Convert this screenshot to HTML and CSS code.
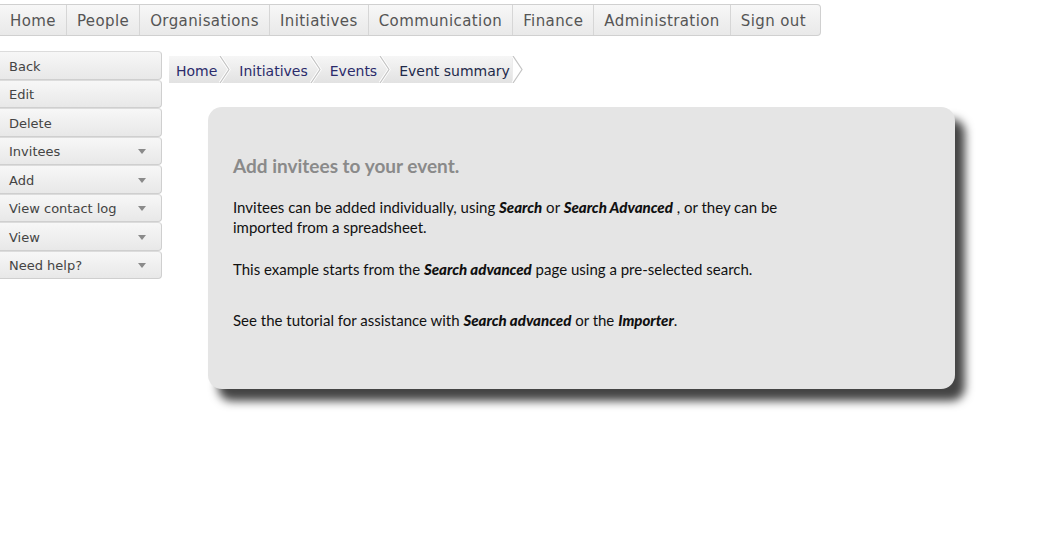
FILE: index.html
```html
<!DOCTYPE html>
<html>
<head>
<meta charset="utf-8">
<link rel="stylesheet" href="styles.css">
</head>
<body>
<nav class="topnav">
  <a class="nav-item">Home</a>
  <a class="nav-item">People</a>
  <a class="nav-item">Organisations</a>
  <a class="nav-item">Initiatives</a>
  <a class="nav-item">Communication</a>
  <a class="nav-item">Finance</a>
  <a class="nav-item">Administration</a>
  <a class="nav-item last">Sign out</a>
</nav>
<div class="main">
  <aside class="sidebar">
    <div class="side-btn">Back</div>
    <div class="side-btn">Edit</div>
    <div class="side-btn">Delete</div>
    <div class="side-btn drop">Invitees<span class="caret"></span></div>
    <div class="side-btn drop">Add<span class="caret"></span></div>
    <div class="side-btn drop">View contact log<span class="caret"></span></div>
    <div class="side-btn drop">View<span class="caret"></span></div>
    <div class="side-btn drop">Need help?<span class="caret"></span></div>
  </aside>
  <section class="content">
    <div class="crumbs">
      <span class="crumb">Home</span><svg class="chev" width="13" height="27" viewBox="0 0 13 27"><polyline points="1,0 10,13.5 1,27" fill="none" stroke="#fff" stroke-width="3"/><polyline points="1,0 10,13.5 1,27" fill="none" stroke="#c4c4c4" stroke-width="1.2"/></svg>
      <span class="crumb">Initiatives</span><svg class="chev" width="13" height="27" viewBox="0 0 13 27"><polyline points="1,0 10,13.5 1,27" fill="none" stroke="#fff" stroke-width="3"/><polyline points="1,0 10,13.5 1,27" fill="none" stroke="#c4c4c4" stroke-width="1.2"/></svg>
      <span class="crumb">Events</span><svg class="chev" width="13" height="27" viewBox="0 0 13 27"><polyline points="1,0 10,13.5 1,27" fill="none" stroke="#fff" stroke-width="3"/><polyline points="1,0 10,13.5 1,27" fill="none" stroke="#c4c4c4" stroke-width="1.2"/></svg>
      <span class="crumb current">Event summary</span><svg class="chev last" width="12" height="27" viewBox="0 0 12 27"><polyline points="1,0 10,13.5 1,27" fill="none" stroke="#fff" stroke-width="3"/><polyline points="1,0 10,13.5 1,27" fill="none" stroke="#c4c4c4" stroke-width="1.2"/></svg>
    </div>
    <div class="card">
      <h2 class="card-title">Add invitees to your event.</h2>
      <p class="card-text">Invitees can be added individually, using <b><i>Search</i></b> or <b><i>Search Advanced</i></b> , or they can be<br>imported from a spreadsheet.</p>
      <p class="card-text">This example starts from the <b><i>Search advanced</i></b> page using a pre-selected search.</p>
      <p class="card-text gap">See the tutorial for assistance with <b><i>Search advanced</i></b> or the <b><i>Importer</i></b>.</p>
    </div>
  </section>
</div>
</body>
</html>
```
FILE: styles.css
```css
html, body {
  margin: 0;
  padding: 0;
  background: #fff;
}
body {
  font-family: "DejaVu Sans", Verdana, sans-serif;
  min-height: 556px;
}
.topnav {
  display: flex;
  margin-top: 4px;
  width: max-content;
  height: 32px;
  box-sizing: border-box;
  border: 1px solid #d0d0d0;
  border-left: none;
  border-radius: 0 4px 4px 0;
  background: linear-gradient(#f7f7f7, #e9e9e9);
}
.nav-item {
  display: flex;
  align-items: center;
  padding: 1px 10px 0;
  font-size: 15px;
  letter-spacing: 0.4px;
  color: #555;
  border-right: 1px solid #d6d6d6;
  white-space: nowrap;
}
.nav-item.last {
  border-right: none;
  padding-right: 14px;
}
.main {
  display: flex;
  margin-top: 15px;
  padding-bottom: 60px;
}
.sidebar {
  width: 162px;
  display: flex;
  flex-direction: column;
}
.side-btn {
  display: flex;
  align-items: center;
  justify-content: space-between;
  height: 28.5px;
  box-sizing: border-box;
  padding: 2px 15px 0 9px;
  font-size: 13px;
  color: #444;
  background: linear-gradient(#f7f7f7, #e8e8e8);
  border: 1px solid #cfcfcf;
  border-left: none;
  border-top-color: #dcdcdc;
  border-radius: 0 4px 4px 0;
}
.caret {
  width: 0;
  height: 0;
  border-left: 4.5px solid transparent;
  border-right: 4.5px solid transparent;
  border-top: 5px solid #8a8a8a;
}
.content {
  padding-left: 7px;
  padding-bottom: 40px;
  flex: 1;
}
.crumbs {
  display: flex;
  align-items: stretch;
  height: 27px;
  margin-top: 5px;
  width: max-content;
}
.crumb {
  display: flex;
  align-items: center;
  padding: 2px 2px 0 7px;
  font-size: 14px;
  color: #2b2b6b;
  background: linear-gradient(#f6f6f6, #e2e2e2);
}
.crumb.current {
  color: #1e2a4a;
}
.chev {
  display: block;
  background: linear-gradient(#f6f6f6, #e2e2e2);
}
.chev.last {
  background: linear-gradient(to right, #ececec 0, #ececec 1px, #fff 1px);
}
.card {
  margin: 24px 0 0 39px;
  width: 747px;
  height: 282px;
  box-sizing: border-box;
  padding: 47px 25px 0;
  background: #e5e5e5;
  border-radius: 14px;
  box-shadow: 10px 12px 10px #444;
  font-family: "Lato", "Open Sans", sans-serif;
}
.card-title {
  margin: 0 0 20px;
  font-size: 19px;
  font-weight: bold;
  color: #8a8a8a;
}
.card-text {
  margin: 0 0 22px;
  font-size: 15px;
  line-height: 20px;
  color: #111;
}
.card-text b {
  font-weight: 900;
}
.card-text.gap {
  margin-top: 31px;
}
```
